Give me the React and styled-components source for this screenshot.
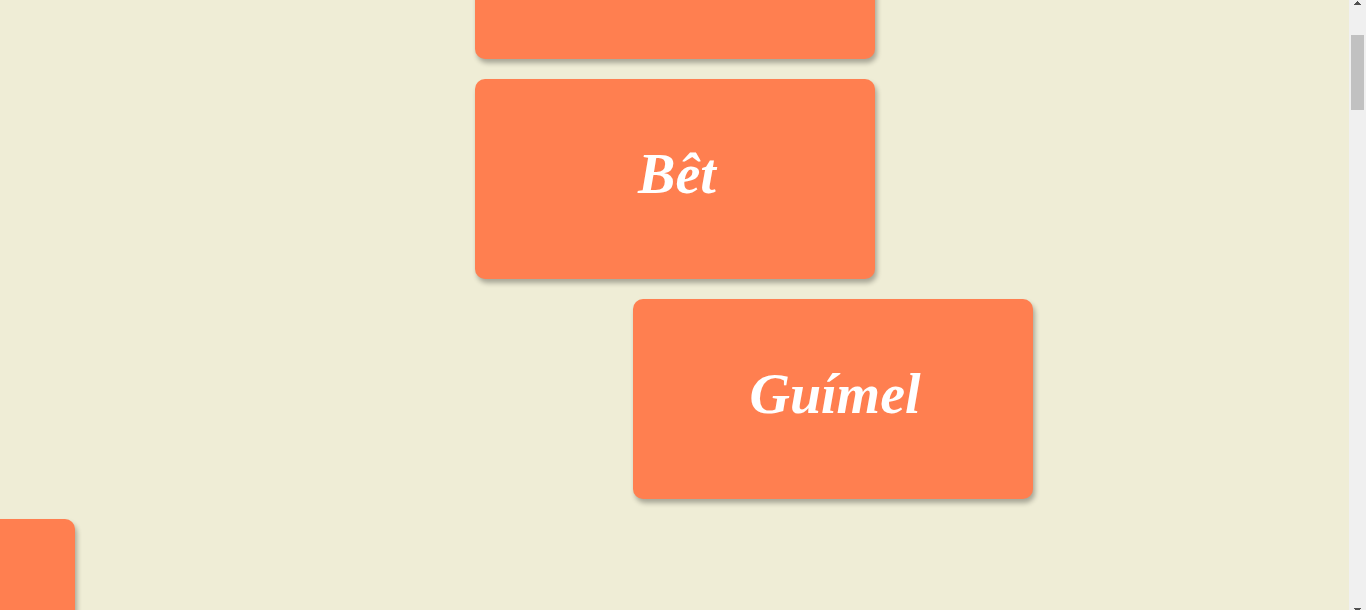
import React from "react";
import styled, { createGlobalStyle } from "styled-components";

const GlobalStyle = createGlobalStyle`
  * { box-sizing: border-box; }
  body {
    margin: 0;
    background: #efedd6;
    overflow: hidden;
  }
`;

const Page = styled.div`
  display: flex;
  height: 100vh;
  overflow: hidden;
`;

const Viewport = styled.main`
  flex: 1;
  min-width: 0;
  overflow: hidden;
`;

const CardList = styled.div`
  display: flex;
  flex-direction: column;
  align-items: center;
  gap: 20px;
  margin-top: -141px;
`;

const Card = styled.section`
  display: flex;
  align-items: center;
  justify-content: center;
  flex: none;
  width: 400px;
  height: 200px;
  padding: 0 0 10px 5px;
  border-radius: 10px;
  background: coral;
  box-shadow: 2px 4px 5px rgba(0, 0, 0, 0.3);
  transform: translateX(${({ $slide }) => $slide || "0"});
`;

const Title = styled.h2`
  margin: 0;
  color: #fff;
  font: italic bold 56px/64px "Lucida Calligraphy", "Liberation Serif", serif;
`;

const Track = styled.div`
  display: flex;
  flex-direction: column;
  align-items: center;
  flex: none;
  width: 17px;
  height: 100%;
  background: #f0f0f0;
`;

const Thumb = styled.div`
  width: 13px;
  height: 75px;
  margin-top: 30px;
  background: #c1c1c1;
`;

const Arrow = styled.svg`
  display: block;
  width: 7px;
  height: 4px;
  margin-top: 1px;
  fill: #505050;
  shape-rendering: crispEdges;
`;

const ArrowEdge = styled.svg`
  display: block;
  width: 7px;
  height: 2px;
  margin-top: auto;
  fill: #505050;
  shape-rendering: crispEdges;
`;

const cards = [
  { title: "" },
  { title: "Bêt" },
  { title: "Guímel", slide: "158px" },
  { title: "", slide: "-200%" },
];

export default function App() {
  return (
    <>
      <GlobalStyle />
      <Page>
        <Viewport>
          <CardList>
            {cards.map((card, i) => (
              <Card key={i} $slide={card.slide}>
                {card.title && <Title>{card.title}</Title>}
              </Card>
            ))}
          </CardList>
        </Viewport>
        <Track aria-hidden="true">
          <Arrow viewBox="0 0 7 4">
            <path d="M3 0h1v1h1v1h1v1h1v1H0V3h1V2h1V1h1z" />
          </Arrow>
          <Thumb />
          <ArrowEdge viewBox="0 0 7 2">
            <path d="M0 0h7v1H6v1H1V1H0z" />
          </ArrowEdge>
        </Track>
      </Page>
    </>
  );
}
